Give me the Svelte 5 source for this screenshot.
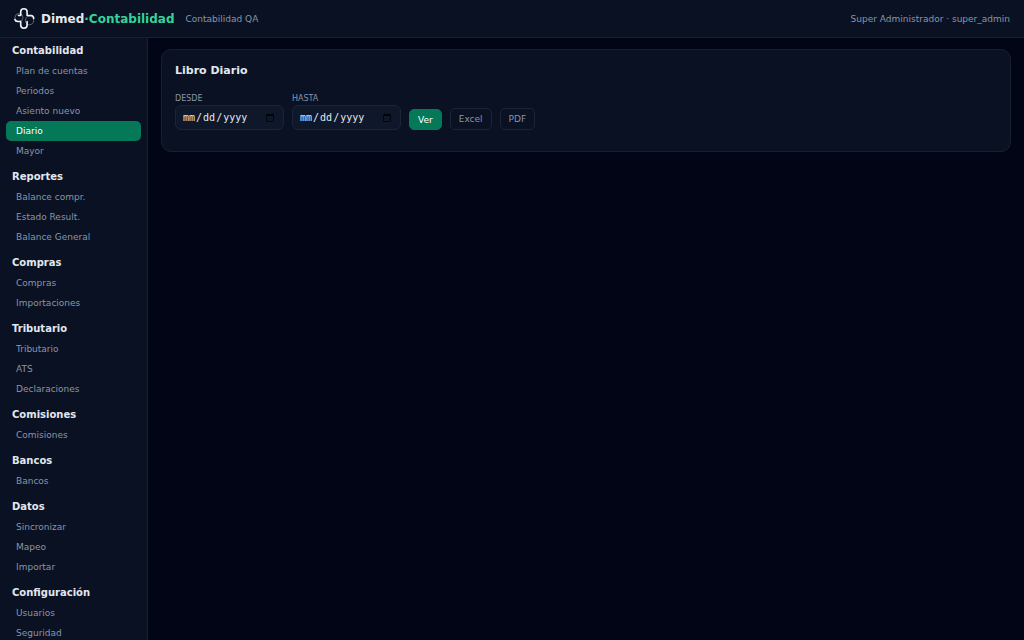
<script lang="ts">
  type NavGroup = { title: string; items: string[] };

  const groups: NavGroup[] = [
    {
      title: 'Contabilidad',
      items: ['Plan de cuentas', 'Periodos', 'Asiento nuevo', 'Diario', 'Mayor']
    },
    { title: 'Reportes', items: ['Balance compr.', 'Estado Result.', 'Balance General'] },
    { title: 'Compras', items: ['Compras', 'Importaciones'] },
    { title: 'Tributario', items: ['Tributario', 'ATS', 'Declaraciones'] },
    { title: 'Comisiones', items: ['Comisiones'] },
    { title: 'Bancos', items: ['Bancos'] },
    { title: 'Datos', items: ['Sincronizar', 'Mapeo', 'Importar'] },
    { title: 'Configuración', items: ['Usuarios', 'Seguridad'] }
  ];

  let active = $state('Diario');
  let desde = $state('');
  let hasta = $state('');

  function go(event: MouseEvent, item: string) {
    event.preventDefault();
    active = item;
  }
</script>

<div class="app">
  <header class="topbar">
    <svg class="logo" viewBox="0 0 21 21" fill="none" aria-hidden="true">
      <g stroke="#7d8696" stroke-width="0.7">
        <circle cx="5" cy="9.500" r="4" />
        <circle cx="15.500" cy="12.500" r="4.200" />
      </g>
      <path
        d="M6.700 7.500V4a3.200 3.200 0 0 1 6.400 0v3.500h4a2.800 2.800 0 0 1 2.600 3M13.100 13.500V17a3.200 3.200 0 0 1-6.400 0v-3.500H3.500a2.800 2.800 0 0 1-2.600-2M6.700 7.500H4.500"
        stroke="#f1f5f9"
        stroke-width="1.600"
        stroke-linecap="round"
        stroke-linejoin="round"
      />
    </svg>
    <span class="brand">Dimed<span class="accent">·Contabilidad</span></span>
    <span class="company">Contabilidad QA</span>
    <span class="user">Super Administrador · super_admin</span>
  </header>

  <div class="body">
    <nav class="sidebar" aria-label="Principal">
      {#each groups as group (group.title)}
        <section class="group">
          <h2>{group.title}</h2>
          {#each group.items as item (item)}
            <a
              href="#{item}"
              class:active={active === item}
              aria-current={active === item ? 'page' : undefined}
              onclick={(e) => go(e, item)}>{item}</a
            >
          {/each}
        </section>
      {/each}
    </nav>

    <main>
      <section class="card">
        <h1>Libro Diario</h1>
        <form class="filters" onsubmit={(e) => e.preventDefault()}>
          <div class="field">
            <label for="desde">Desde</label>
            <input id="desde" type="date" bind:value={desde} />
          </div>
          <div class="field">
            <label for="hasta">Hasta</label>
            <input id="hasta" type="date" bind:value={hasta} />
          </div>
          <button class="primary" type="submit">Ver</button>
          <button type="button">Excel</button>
          <button type="button">PDF</button>
        </form>
      </section>
    </main>
  </div>
</div>

<style>
  :global(body) {
    background: #020515;
  }

  .app {
    --panel: #0a1122;
    --line: #172033;
    --muted: #8995a8;

    height: 100vh;
    display: flex;
    flex-direction: column;
    overflow: hidden;
    color: #e2e8f0;
    background: #020515;
    font-family: 'DejaVu Sans', sans-serif;
    font-size: 9px;
  }

  .topbar {
    flex: none;
    display: flex;
    align-items: center;
    padding: 8px 14px;
    border-bottom: 1px solid var(--line);
    background: var(--panel);
  }

  .logo {
    width: 21px;
    height: 21px;
    margin-right: 6px;
  }

  .brand {
    font-size: 12px;
    font-weight: 700;
  }

  .accent {
    color: #34d399;
  }

  .company {
    margin-left: 11px;
    color: var(--muted);
  }

  .user {
    margin-left: auto;
    color: var(--muted);
  }

  .body {
    flex: 1;
    min-height: 0;
    display: flex;
  }

  .sidebar {
    flex: none;
    width: 135px;
    padding: 3px 6px;
    overflow: hidden;
    border-right: 1px solid var(--line);
    background: var(--panel);
  }

  .group {
    display: flex;
    flex-direction: column;
    margin-bottom: 6px;
  }

  .group h2 {
    margin: 0;
    padding: 0 6px;
    font-size: 10px;
    line-height: 20px;
  }

  .group a {
    padding: 0 10px;
    border-radius: 5px;
    color: var(--muted);
    line-height: 20px;
    text-decoration: none;
  }

  .group a:hover {
    background: #131c2e;
  }

  .group a.active {
    color: #fff;
    background: #047857;
  }

  main {
    flex: 1;
    min-width: 0;
    padding: 11px 13px;
  }

  .card {
    padding: 12px 13px 21px;
    border: 1px solid var(--line);
    border-radius: 10px;
    background: var(--panel);
  }

  h1 {
    margin: 0 0 12px;
    font-size: 11px;
    line-height: 18px;
  }

  .filters {
    display: flex;
    align-items: flex-end;
    gap: 8px;
  }

  .field {
    display: flex;
    flex-direction: column;
  }

  .field label {
    color: var(--muted);
    font-size: 8px;
    line-height: 13px;
    text-transform: uppercase;
  }

  .field input {
    box-sizing: border-box;
    width: 109px;
    height: 25px;
    padding: 0 6px;
    border: 1px solid #1a2537;
    border-radius: 6px;
    color: #e2e8f0;
    background: #0f172a;
    font-family: 'DejaVu Sans Mono', monospace;
    font-size: 10px;
  }

  button {
    height: 22px;
    padding: 0 8px;
    border: 1px solid #1a2537;
    border-radius: 5px;
    color: var(--muted);
    background: transparent;
    font: inherit;
  }

  .primary {
    height: 21px;
    border-color: #047857;
    color: #fff;
    background: #047857;
  }
</style>
